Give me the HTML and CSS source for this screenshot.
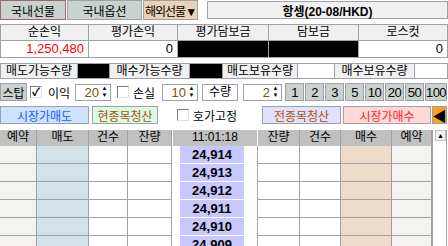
FILE: index.html
```html
<!DOCTYPE html>
<html lang="ko">
<head>
  <meta charset="UTF-8">
  <title>해외선물 주문</title>
  <link rel="stylesheet" href="styles.css">
</head>
<body>
  <div class="panel">

    <div class="tabs">
      <div class="tab tab-on">국내선물</div>
      <div class="tab tab-opt">국내옵션</div>
      <div class="tab tab-ovs">해외선물▼</div>
      <div class="title">항셍(20-08/HKD)</div>
    </div>

    <div class="summary">
      <div class="sh">순손익</div>
      <div class="sh">평가손익</div>
      <div class="sh">평가담보금</div>
      <div class="sh">담보금</div>
      <div class="sh">로스컷</div>
      <div class="sv red">1,250,480</div>
      <div class="sv">0</div>
      <div class="sv blk"></div>
      <div class="sv blk"></div>
      <div class="sv">0</div>
    </div>

    <div class="qty">
      <div class="ql w78">매도가능수량</div>
      <div class="qb blk w32"></div>
      <div class="ql w80">매수가능수량</div>
      <div class="qb blk w33"></div>
      <div class="ql w75">매도보유수량</div>
      <div class="qb w37"></div>
      <div class="ql w80">매수보유수량</div>
      <div class="qb grow"></div>
    </div>

    <div class="opts">
      <div class="btn stop">스탑</div>
      <span class="chk on">✓</span>
      <span class="lbl gain">이익</span>
      <div class="spin sp1">
        <span class="num">20</span>
        <span class="arr"><i>▲</i><i>▼</i></span>
      </div>
      <span class="chk loss-chk"></span>
      <span class="lbl loss">손실</span>
      <div class="spin sp2">
        <span class="num">10</span>
        <span class="arr"><i>▲</i><i>▼</i></span>
      </div>
      <div class="qtylbl">수량</div>
      <div class="spin sp3">
        <span class="num">2</span>
        <span class="arr"><i>▲</i><i>▼</i></span>
      </div>
      <div class="nums">
        <div class="btn nb">1</div>
        <div class="btn nb">2</div>
        <div class="btn nb">3</div>
        <div class="btn nb">5</div>
        <div class="btn nb">10</div>
        <div class="btn nb">20</div>
        <div class="btn nb">50</div>
        <div class="btn nb last">100</div>
      </div>
    </div>

    <div class="actions">
      <div class="act sell">시장가매도</div>
      <div class="act clr">현종목청산</div>
      <span class="chk fix"></span>
      <span class="lbl hold">호가고정</span>
      <div class="act clrall">전종목청산</div>
      <div class="act buy">시장가매수</div>
      <div class="act back">◀</div>
    </div>

    <div class="book">
      <div class="grid">
        <div class="gh">예약</div>
        <div class="gh">매도</div>
        <div class="gh">건수</div>
        <div class="gh">잔량</div>
        <div class="gh time">11:01:18</div>
        <div class="gh">잔량</div>
        <div class="gh">건수</div>
        <div class="gh">매수</div>
        <div class="gh">예약</div>
      </div>
      <div id="rows"></div>
      <div class="sbar"><div class="sup">▲</div></div>
    </div>

  </div>
  <script>
    // 호가 행 채우기
    var prices = ['24,914', '24,913', '24,912', '24,911', '24,910', '24,909'];
    var html = '';
    prices.forEach(function(p) {
      html += '<div class="grid row">' +
        '<div class="c rsv"></div><div class="c ask"></div>' +
        '<div class="c"></div><div class="c"></div>' +
        '<div class="c pc"><span class="price">' + p + '</span></div>' +
        '<div class="c"></div><div class="c"></div>' +
        '<div class="c bid"></div><div class="c rsv"></div></div>';
    });
    document.getElementById('rows').innerHTML = html;
  </script>
</body>
</html>
```

FILE: styles.css
```css
body {
  margin: 0;
  background-color: white;
  font-family: "Liberation Sans", "Noto Sans CJK KR", sans-serif;
  font-size: 12px;
  color: #000;
  white-space: nowrap;
}

.panel {
  width: 448px;
  height: 246px;
  overflow: hidden;
}

.panel * {
  flex-shrink: 0;
}

.tabs {
  display: flex;
  height: 21px;
}

.tab {
  box-sizing: border-box;
  height: 20px;
  border: 1px solid #a0a0a8;
  background-color: #c9d2ce;
  display: flex;
  align-items: center;
  justify-content: center;
  font-size: 12px;
  margin-right: 1px;
}

.tab-on {
  width: 66px;
  border-color: #a06868;
}

.tab-opt {
  width: 75px;
}

.tab-ovs {
  width: 55px;
  background-color: #ead2b8;
  letter-spacing: -1px;
}

.title {
  box-sizing: border-box;
  margin-left: 8px;
  margin-top: 1px;
  height: 18px;
  flex: 1;
  border: 1px solid #a0a0a8;
  background-color: #f0f0f0;
  display: flex;
  align-items: center;
  justify-content: center;
  font-weight: bold;
  font-size: 12px;
}

.summary {
  margin-top: 3px;
  display: grid;
  grid-template-columns: 88px 89px 91px 90px 1fr;
  border-top: 1px solid #a0a0a8;
  border-left: 1px solid #a0a0a8;
}

.sh, .sv {
  box-sizing: border-box;
  border-right: 1px solid #a0a0a8;
  border-bottom: 1px solid #a0a0a8;
}

.sh {
  height: 16px;
  background-color: #f0f0f0;
  text-align: center;
  line-height: 15px;
}

.sv {
  height: 17px;
  text-align: right;
  padding-right: 4px;
  line-height: 16px;
  font-size: 13px;
}

.red {
  color: #ff0000;
}

.blk {
  background-color: #000;
}

.qty {
  display: flex;
  margin-top: 5px;
  height: 16px;
}

.ql, .qb {
  box-sizing: border-box;
  height: 16px;
  border: 1px solid #a0a0a8;
  margin-right: -1px;
}

.ql {
  background-color: #f0f0f0;
  text-align: center;
  line-height: 14px;
}

.w78 { width: 78px; }
.w80 { width: 81px; }
.w75 { width: 76px; }
.w32 { width: 33px; }
.w33 { width: 34px; }
.w37 { width: 38px; }
.grow { flex: 1; margin-right: 0; }

.opts {
  display: flex;
  align-items: center;
  margin-top: 4px;
  height: 18px;
}

.btn {
  box-sizing: border-box;
  height: 18px;
  border: 1px solid #a0a0a8;
  background-color: #c9d2ce;
  display: flex;
  align-items: center;
  justify-content: center;
  font-size: 12px;
}

.stop {
  width: 27px;
}

.chk {
  box-sizing: border-box;
  width: 12px;
  height: 12px;
  border: 1px solid #808080;
  border-right-color: #e0e0e0;
  border-bottom-color: #e0e0e0;
  background-color: white;
  font-size: 11px;
  line-height: 10px;
  text-align: center;
  font-weight: bold;
  margin-left: 3px;
}

.lbl {
  width: 24px;
  font-size: 12px;
}

.gain {
  margin-left: 6px;
}

.loss-chk {
  margin-left: 6px;
}

.loss {
  margin-left: 4px;
}

.spin {
  box-sizing: border-box;
  display: flex;
  width: 36px;
  height: 17px;
  border: 1px solid #a0a0a8;
  background-color: white;
}

.sp1 {
  margin-left: 3px;
}

.sp2 {
  margin-left: 5px;
}

.sp3 {
  width: 39px;
  margin-left: 5px;
}

.num {
  flex: 1;
  text-align: right;
  color: #6e5a00;
  font-size: 13px;
  line-height: 15px;
}

.arr {
  width: 11px;
  display: flex;
  flex-direction: column;
}

.arr i {
  font-style: normal;
  font-size: 6px;
  line-height: 7px;
  text-align: center;
  height: 7px;
}

.qtylbl {
  box-sizing: border-box;
  width: 36px;
  height: 17px;
  border: 1px solid #a0a0a8;
  text-align: center;
  line-height: 15px;
  margin-left: 4px;
}

.nums {
  display: flex;
  margin-left: 3px;
}

.nb {
  width: 19px;
  margin-right: 1px;
  font-size: 13px;
  letter-spacing: -0.5px;
}

.last {
  width: 22px;
  margin-right: 0;
}

.actions {
  display: flex;
  align-items: center;
  margin-top: 5px;
  height: 18px;
}

.act {
  box-sizing: border-box;
  height: 18px;
  border: 1px solid #a0a0a8;
  display: flex;
  align-items: center;
  justify-content: center;
  font-size: 12px;
}

.sell {
  width: 89px;
  background-color: #cce2ff;
  color: #1060ff;
}

.clr {
  width: 66px;
  margin-left: 3px;
  background-color: #d8fbe8;
  color: #b05000;
}

.fix {
  margin-left: 19px;
}

.hold {
  margin-left: 4px;
  width: 48px;
}

.clrall {
  width: 79px;
  margin-left: 21px;
  background-color: #e0e0ff;
  color: #b05000;
}

.buy {
  width: 88px;
  margin-left: 2px;
  background-color: #ffd8d8;
  color: #ff2020;
}

.back {
  width: 15px;
  margin-left: 1px;
  background-color: #ffa020;
  color: #000;
  font-size: 14px;
}

.book {
  position: relative;
  margin-top: 6px;
}

.grid {
  display: grid;
  grid-template-columns: 37px 52px 39px 44px 86px 42px 41px 51px 40px;
  width: 432px;
}

.gh {
  box-sizing: border-box;
  height: 16px;
  background-color: #c0c0c0;
  border-right: 1px solid #a0a0a8;
  text-align: center;
  line-height: 15px;
}

.gh.time {
  border-left: 1px solid white;
  border-right: 1px solid white;
}

.row .c {
  box-sizing: border-box;
  height: 18px;
  border-right: 1px solid #a0a0a8;
  border-bottom: 1px solid #a0a0a8;
}

.c.rsv {
  background-color: #f5f3ef;
}

.c.ask {
  background-color: #d2e2e8;
}

.c.bid {
  background-color: #f0dcca;
}

.c.pc {
  border-bottom: none;
  padding-left: 8px;
  padding-right: 13px;
}

.price {
  display: block;
  height: 17px;
  background-color: #c8c8ff;
  border-bottom: 1px solid white;
  text-align: center;
  font-weight: bold;
  font-size: 13px;
  line-height: 18px;
}

.sbar {
  position: absolute;
  left: 432px;
  top: 0;
  width: 15px;
  height: 130px;
  border-left: 1px solid #a0a0a8;
  border-right: 1px solid #a0a0a8;
  box-sizing: border-box;
}

.sup {
  width: 11px;
  height: 11px;
  margin: 0 0 0 2px;
  box-sizing: border-box;
  border: 1px solid #c0c0c0;
  background-color: #f0f0f0;
  font-size: 7px;
  line-height: 10px;
  text-align: center;
}
```
